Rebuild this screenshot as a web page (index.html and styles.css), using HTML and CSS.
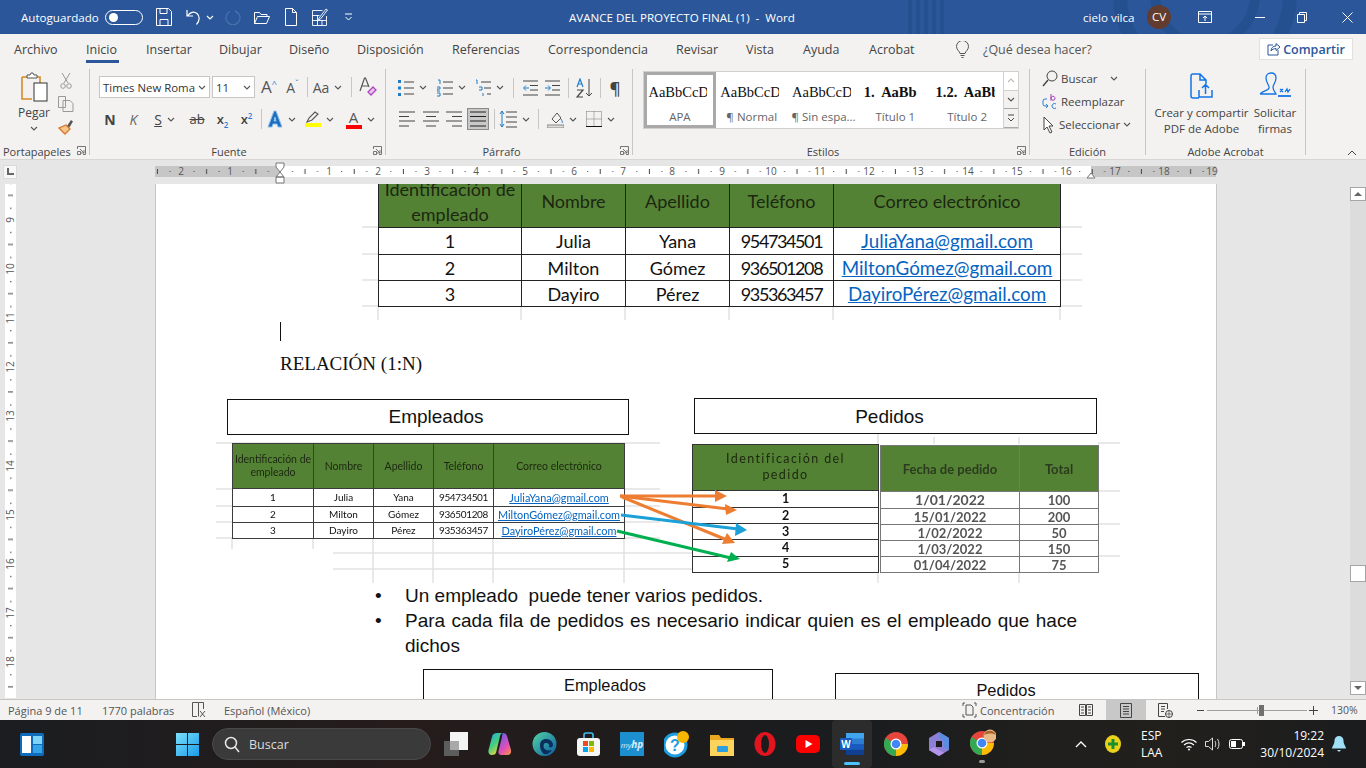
FILE: index.html
```html
<!DOCTYPE html>
<html lang="es">

<head>
    <meta charset="UTF-8">
    <meta name="viewport" content="width=device-width, initial-scale=1.0">
    <title>AVANCE DEL PROYECTO FINAL (1) - Word</title>
    <link rel="stylesheet" href="styles.css">
</head>

<body>
    <svg class="defs" width="0" height="0">
        <symbol id="chev" viewBox="0 0 8 5"><path d="M1 1l3 3 3-3" fill="none" stroke="currentColor" stroke-width="1.1"/></symbol>
        <symbol id="launch" viewBox="0 0 9 9"><path d="M.5 3V.5h8v8H6M3 3l4 4M7 4v3H4M.5 5.5h3v3h-3z" fill="none" stroke="#666" stroke-width=".9"/></symbol>
    </svg>

    <!-- barra de titulo -->
    <header class="titlebar">
        <svg class="title-deco" viewBox="905 0 461 34" width="461" height="34">
            <path d="M910 0v34M918 0v34M926 0v34M934 0v34M942 0v34" stroke="#25508f" stroke-width="4"/>
            <circle cx="1205" cy="-5" r="85" fill="none" stroke="#25508f" stroke-width="14"/>
            <circle cx="1205" cy="-5" r="50" fill="none" stroke="#25508f" stroke-width="10"/>
        </svg>
        <span class="qat-label">Autoguardado</span>
        <span class="toggle"><span class="toggle-dot"></span></span>
        <svg class="qat-save" width="16" height="18" viewBox="0 0 16 18"><path d="M.5.5h12l3 3v14H.5zM4 .5v5h7v-5M4 17.5v-6h8v6" fill="none" stroke="#fff"/></svg>
        <svg class="qat-undo" width="15" height="16" viewBox="0 0 15 16"><path d="M1 1v6h6M1.5 7C4 3 8 2 11 4.500s3 7-.5 11" fill="none" stroke="#fff" stroke-width="1.200"/></svg>
        <svg class="chev qat-chev" width="8" height="5"><use href="#chev"/></svg>
        <svg class="qat-redo" width="16" height="16" viewBox="0 0 16 16"><path d="M10 1.500l3 3M5 2.500a7 7 0 1 0 6 0" fill="none" stroke="#4d74ac" stroke-width="1.100"/></svg>
        <svg class="qat-open" width="16" height="13" viewBox="0 0 16 13"><path d="M.5 12.500V1.500h5l1.500 2h6v2M.5 12.500h12l3-7H3.500z" fill="none" stroke="#fff"/></svg>
        <svg class="qat-new" width="12" height="18" viewBox="0 0 12 18"><path d="M.5.5h7l4 4v13H.5zM7.500.5v4h4" fill="none" stroke="#fff"/></svg>
        <svg class="qat-edit" width="16" height="18" viewBox="0 0 16 18"><path d="M.5 2.500h10M.5 2.500v15h14V8M.5 7.500h7M.5 12.500h14M5.500 7v10.500M10 12.500v5M7 10l7-9 1.500 1-7 9-2 1z" fill="none" stroke="#fff" stroke-width=".9"/></svg>
        <svg class="qat-more" width="9" height="8" viewBox="0 0 9 8"><path d="M1 1h7M1.500 4l3 3 3-3" fill="none" stroke="#fff"/></svg>
        <span class="doc-title">AVANCE DEL PROYECTO FINAL (1)&nbsp; -&nbsp; Word</span>
        <span class="user-name">cielo vilca</span>
        <span class="avatar">CV</span>
        <svg class="win-ribbon" width="14" height="12" viewBox="0 0 14 12"><path d="M.5.5h13v11H.5zM.5 3h13M7 10V5M5 7l2-2 2 2" fill="none" stroke="#fff"/></svg>
        <svg class="win-min" width="10" height="1"><rect width="10" height="1" fill="#fff"/></svg>
        <svg class="win-max" width="10" height="11" viewBox="0 0 10 11"><path d="M.5 2.500h7v8h-7zM2.500 2.500v-2h7v8h-2" fill="none" stroke="#fff"/></svg>
        <svg class="win-close" width="11" height="11" viewBox="0 0 11 11"><path d="M.5.5l10 10M10.500.5l-10 10" stroke="#fff"/></svg>
    </header>

    <!-- pestañas -->
    <nav class="tabs">
        <span class="tab t-archivo">Archivo</span>
        <span class="tab t-inicio active">Inicio</span>
        <span class="tab t-insertar">Insertar</span>
        <span class="tab t-dibujar">Dibujar</span>
        <span class="tab t-diseno">Diseño</span>
        <span class="tab t-dispo">Disposición</span>
        <span class="tab t-ref">Referencias</span>
        <span class="tab t-corr">Correspondencia</span>
        <span class="tab t-rev">Revisar</span>
        <span class="tab t-vista">Vista</span>
        <span class="tab t-ayuda">Ayuda</span>
        <span class="tab t-acro">Acrobat</span>
        <svg class="bulb" width="13" height="17" viewBox="0 0 13 17"><path d="M4 12.500C3.500 10 .5 9 .5 5.500a6 6 0 0 1 12 0C12.500 9 9.500 10 9 12.500zM4.500 14.500h4M5.500 16.500h2" fill="none" stroke="#555"/></svg>
        <span class="tab tell">¿Qué desea hacer?</span>
        <span class="share">
            <svg width="14" height="14" viewBox="0 0 14 14"><path d="M6 3H1v10h10V8M4 9c0-3 2-5 5-5V1.500l4 3.500-4 3.500V6.500C7 6.500 5 7.500 4 9z" fill="none" stroke="#2b579a"/></svg>
            Compartir
        </span>
    </nav>

    <!-- cinta -->
    <section class="ribbon">
        <div class="group g-clip">
            <div class="clip-body">
                <div class="paste">
                    <svg width="27" height="30" viewBox="0 0 27 30"><path d="M1 5h7M15 5h4v6M1 5v22h10" fill="none" stroke="#d58a2a" stroke-width="1.600"/><path d="M6 6V3h3l1-2h2l1 2h3v3z" fill="#fff" stroke="#555"/><rect x="13" y="11" width="13" height="18" fill="#fff" stroke="#333"/></svg>
                    <span class="paste-label">Pegar</span>
                    <svg class="chev" width="8" height="5"><use href="#chev"/></svg>
                </div>
                <div class="clip-tools">
                    <svg width="12" height="17" viewBox="0 0 12 17"><path d="M2 1l6 10M10 1L4 11" stroke="#999" fill="none"/><circle cx="3" cy="14" r="2.300" fill="none" stroke="#999"/><circle cx="9" cy="14" r="2.300" fill="none" stroke="#999"/></svg>
                    <svg width="16" height="16" viewBox="0 0 16 16"><path d="M.5.5h7v11h-7zM5 4.500h7l3 3v8H5z" fill="#f3f2f1" stroke="#999"/></svg>
                    <svg width="16" height="16" viewBox="0 0 16 16"><path d="M9 7l4-6 2 1.500L11 9z" fill="#555"/><path d="M8 6l4 4-5 5-6-6z" fill="#f6c590" stroke="#d9782a" stroke-width="1.300"/></svg>
                </div>
            </div>
            <div class="group-label left">Portapapeles</div>
            <svg class="launcher" width="9" height="9"><use href="#launch"/></svg>
        </div>

        <div class="group g-font">
            <div class="row font-r1">
                <span class="combo"><span class="combo-text">Times New Roma</span><svg class="chev" width="8" height="5"><use href="#chev"/></svg></span>
                <span class="combo size"><span class="combo-text">11</span><svg class="chev" width="8" height="5"><use href="#chev"/></svg></span>
                <span class="big-a">A<sup>^</sup></span>
                <span class="small-a">A<sup>ˇ</sup></span>
                <i class="sep"></i>
                <span class="tool"><span class="aa">Aa</span><svg class="chev" width="8" height="5"><use href="#chev"/></svg></span>
                <i class="sep"></i>
                <svg width="18" height="20" viewBox="0 0 18 20"><path d="M1 14L5.500 1h1L10 10M3 9h6" fill="none" stroke="#555" stroke-width="1.200"/><path d="M9 15l5-5 3 3-5 5z" fill="#e8c6ef" stroke="#b146c2" stroke-width="1.300"/></svg>
            </div>
            <div class="row font-r2">
                <b class="fmt bold">N</b>
                <span class="fmt ital">K</span>
                <span class="tool"><span class="fmt under">S</span><svg class="chev" width="8" height="5"><use href="#chev"/></svg></span>
                <span class="fmt strike">ab</span>
                <span class="fmt script">x<sub>2</sub></span>
                <span class="fmt script">x<sup>2</sup></span>
                <i class="sep"></i>
                <span class="tool"><svg width="16" height="18" viewBox="0 0 16 18"><path d="M1 17L7 1h2l6 16h-4l-1-3H6l-1 3zM7 11h2L8 7z" fill="#1f6fc0" stroke="#8cc0ea"/></svg><svg class="chev" width="8" height="5"><use href="#chev"/></svg></span>
                <span class="tool"><span class="color-ic"><svg width="16" height="12" viewBox="0 0 16 12"><path d="M2 11l2-4 6-6 3 2-6 6z" fill="#f3f2f1" stroke="#555" stroke-width="1.100"/></svg><i class="bar yellow"></i></span><svg class="chev" width="8" height="5"><use href="#chev"/></svg></span>
                <span class="tool"><span class="color-ic"><span class="color-a">A</span><i class="bar red"></i></span><svg class="chev" width="8" height="5"><use href="#chev"/></svg></span>
            </div>
            <div class="group-label pad-font">Fuente</div>
            <svg class="launcher" width="9" height="9"><use href="#launch"/></svg>
        </div>

        <div class="group g-para">
            <div class="row para-r1">
                <span class="tool"><svg width="16" height="18" viewBox="0 0 16 18"><path d="M6 3h10M6 9h10M6 15h10" stroke="#444"/><path d="M0 1h3v3H0zM0 7.500h3v3H0zM0 14h3v3H0z" fill="#1f7cc8"/></svg><svg class="chev" width="8" height="5"><use href="#chev"/></svg></span>
                <span class="tool"><svg width="16" height="18" viewBox="0 0 16 18"><path d="M6 3h10M6 9h10M6 15h10" stroke="#444"/><path d="M1 1h2v4M0 8h3v2H0v2h3M0 14h3v3H0" fill="none" stroke="#1f7cc8"/></svg><svg class="chev" width="8" height="5"><use href="#chev"/></svg></span>
                <span class="tool"><svg width="16" height="18" viewBox="0 0 16 18"><path d="M6 3h10M9 9h7M12 15h4" stroke="#444"/><path d="M1 1h1v4M4 8h3v3H4M8 14v3" fill="none" stroke="#1f7cc8"/></svg><svg class="chev" width="8" height="5"><use href="#chev"/></svg></span>
                <i class="sep"></i>
                <svg width="15" height="16" viewBox="0 0 15 16"><path d="M0 1h15M7 5.500h8M7 10h8M0 15h15" stroke="#444"/><path d="M6 8H1M3 5.500L.5 8 3 10.500" stroke="#1f7cc8" fill="none"/></svg>
                <svg width="15" height="16" viewBox="0 0 15 16"><path d="M0 1h15M7 5.500h8M7 10h8M0 15h15" stroke="#444"/><path d="M0 8h5M3 5.500L5.500 8 3 10.500" stroke="#1f7cc8" fill="none"/></svg>
                <i class="sep"></i>
                <svg width="17" height="20" viewBox="0 0 17 20"><path d="M13 1v17M10 15l3 3 3-3" fill="none" stroke="#444"/><path d="M1 9l3-8 3 8M2 6h4" fill="none" stroke="#1f7cc8" stroke-width="1.200"/><path d="M1 12h6L1 19h6" fill="none" stroke="#444" stroke-width="1.200"/></svg>
                <i class="sep"></i>
                <span class="pilcrow">¶</span>
            </div>
            <div class="row para-r2">
                <svg width="16" height="16" viewBox="0 0 16 16"><path d="M0 1h16M0 5.500h10M0 10h16M0 15h10" stroke="#444"/></svg>
                <svg width="16" height="16" viewBox="0 0 16 16"><path d="M0 1h16M3 5.500h10M0 10h16M3 15h10" stroke="#444"/></svg>
                <svg width="16" height="16" viewBox="0 0 16 16"><path d="M0 1h16M6 5.500h10M0 10h16M6 15h10" stroke="#444"/></svg>
                <span class="justify"><svg width="16" height="16" viewBox="0 0 16 16"><path d="M0 1h16M0 5.500h16M0 10h16M0 15h16" stroke="#222"/></svg></span>
                <i class="sep"></i>
                <span class="tool"><svg width="18" height="18" viewBox="0 0 18 18"><path d="M7 2h11M7 7h11M7 12h11M7 17h11" stroke="#444"/><path d="M3 1v16M1 4l2-3 2 3M1 14l2 3 2-3" fill="none" stroke="#1f7cc8"/></svg><svg class="chev" width="8" height="5"><use href="#chev"/></svg></span>
                <i class="sep"></i>
                <span class="tool"><svg width="17" height="18" viewBox="0 0 17 18"><path d="M5 9l5-6 4 5-5 5z" fill="none" stroke="#555"/><path d="M14 9c1 2 2 3 1 4" stroke="#1f7cc8" fill="none"/><rect y="15" width="17" height="3" fill="#ddd" stroke="#888"/></svg><svg class="chev" width="8" height="5"><use href="#chev"/></svg></span>
                <span class="tool"><svg width="16" height="16" viewBox="0 0 16 16"><path d="M.5.5h15v15M.5 8h15M8 .5v15M.5.5v15" fill="none" stroke="#777" stroke-dasharray="1 1"/><path d="M0 15.500h16" stroke="#111"/></svg><svg class="chev" width="8" height="5"><use href="#chev"/></svg></span>
            </div>
            <div class="group-label pad-para">Párrafo</div>
            <svg class="launcher" width="9" height="9"><use href="#launch"/></svg>
        </div>

        <div class="group g-styles">
            <div class="gallery">
                <div class="style-item selected"><span class="sample">AaBbCcDd</span><span class="style-name">APA</span></div>
                <div class="style-item"><span class="sample">AaBbCcDd</span><span class="style-name">¶ Normal</span></div>
                <div class="style-item"><span class="sample">AaBbCcDd</span><span class="style-name">¶ Sin espa...</span></div>
                <div class="style-item"><span class="sample heading">1.&nbsp; AaBb</span><span class="style-name">Título 1</span></div>
                <div class="style-item"><span class="sample heading">1.2.&nbsp; AaBb</span><span class="style-name">Título 2</span></div>
                <div class="gallery-btns">
                    <span class="g-btn dim"><svg width="8" height="5" viewBox="0 0 8 5"><path d="M1 4l3-3 3 3" fill="none" stroke="#bbb" stroke-width="1.100"/></svg></span>
                    <span class="g-btn"><svg class="chev" width="8" height="5"><use href="#chev"/></svg></span>
                    <span class="g-btn"><svg width="8" height="9" viewBox="0 0 8 9"><path d="M1 1h6M1 4l3 3 3-3" fill="none" stroke="#444"/></svg></span>
                </div>
            </div>
            <div class="group-label pad-styles">Estilos</div>
            <svg class="launcher" width="9" height="9"><use href="#launch"/></svg>
        </div>

        <div class="group g-edit">
            <div class="edit-list">
                <div class="edit-row"><svg width="16" height="17" viewBox="0 0 16 17"><circle cx="10" cy="6" r="5" fill="none" stroke="#444"/><path d="M6 10l-5 6" stroke="#444" stroke-width="1.400"/></svg><span>Buscar</span><svg class="chev find-chev" width="8" height="5"><use href="#chev"/></svg></div>
                <div class="edit-row"><svg width="16" height="16" viewBox="0 0 16 16"><path d="M5 5H3a2 2 0 0 0-2 2v3a2 2 0 0 0 2 2h2M4 10l2 2-2 2" fill="none" stroke="#2b7cd3"/><path d="M9 0v6.500M9 4.500a2 2 0 1 1 3 1.500 2 2 0 0 1-3-1.500" fill="none" stroke="#a33bb5"/><path d="M14 10a2.500 2.500 0 1 0 0 4" fill="none" stroke="#2b7cd3"/></svg><span>Reemplazar</span></div>
                <div class="edit-row"><svg width="14" height="18" viewBox="0 0 14 18"><path d="M2 1v13l3-3 3 6 2-1-3-6h4z" fill="#fff" stroke="#444"/></svg><span>Seleccionar</span><svg class="chev" width="8" height="5"><use href="#chev"/></svg></div>
            </div>
            <div class="group-label nolaunch">Edición</div>
        </div>

        <div class="group g-adobe">
            <div class="adobe-list">
                <div class="adobe-item share-pdf">
                    <svg width="23" height="26" viewBox="0 0 23 26"><path d="M9 25H3a2 2 0 0 1-2-2V3a2 2 0 0 1 2-2h7l6 6v4M10 1v6h6M9 17v7h13v-7M15.500 21v-9M12 15l3.500-3.500L19 15" fill="none" stroke="#1473e6" stroke-width="1.500"/></svg>
                    <span>Crear y compartir<br>PDF de Adobe</span>
                </div>
                <div class="adobe-item sign">
                    <svg width="32" height="28" viewBox="0 0 32 28"><path d="M1 22c4-4 8-3 9-6 1-2-3-5-3-10 0-3 2-5 5-5s5 2 5 5c0 4-3 7-3 9 0 4 3 6 3 7H1M21 17l3 3M24 17l-3 3M26 20l2-3 1 3 2-3" fill="none" stroke="#1473e6" stroke-width="1.300"/><path d="M19 24h13" stroke="#1473e6" stroke-width="1.800"/></svg>
                    <span>Solicitar<br>firmas</span>
                </div>
            </div>
            <div class="group-label nolaunch">Adobe Acrobat</div>
        </div>
        <svg class="collapse" width="10" height="6" viewBox="0 0 10 6"><path d="M1 5l4-4 4 4" fill="none" stroke="#444"/></svg>
    </section>

    <!-- regla -->
    <div class="ruler-band">
        <span class="tab-stop"><svg width="8" height="8" viewBox="0 0 8 8"><path d="M1 0h2v5h5v2H1z" fill="#666"/></svg></span>
        <svg class="hruler" width="1065" height="24" viewBox="155 160 1065 24">
            <defs>
                <pattern id="hticks" x="280" y="166" width="49.2" height="11" patternUnits="userSpaceOnUse">
                    <rect x="12" y="5" width="1" height="1" fill="#444"/>
                    <rect x="24.500" y="3" width="1" height="5" fill="#444"/>
                    <rect x="37" y="5" width="1" height="1" fill="#444"/>
                </pattern>
            </defs>
            <rect x="155" y="166" width="125" height="11" fill="#c6c6c6"/>
            <rect x="280" y="166" width="811" height="11" fill="#fff"/>
            <rect x="1091" y="166" width="125" height="11" fill="#c6c6c6"/>
            <rect x="155" y="166" width="1061" height="11" fill="url(#hticks)"/>
            <g class="ruler-num">
                <text x="181" y="175">2</text><text x="230" y="175">1</text><text x="329" y="175">1</text><text x="378" y="175">2</text><text x="427" y="175">3</text><text x="476" y="175">4</text><text x="525" y="175">5</text><text x="574" y="175">6</text><text x="623" y="175">7</text><text x="672" y="175">8</text><text x="722" y="175">9</text><text x="771" y="175">10</text><text x="820" y="175">11</text><text x="869" y="175">12</text><text x="918" y="175">13</text><text x="968" y="175">14</text><text x="1017" y="175">15</text><text x="1066" y="175">16</text><text x="1115" y="175">17</text><text x="1164" y="175">18</text><text x="1212" y="175">19</text>
            </g>
            <path d="M276 163h8v4l-4 5-4-5zM276 177l4-5 4 5zM276 177h8v6h-8z" fill="#fff" stroke="#777"/>
            <path d="M1087 178l4-5 4 5z" fill="#fff" stroke="#777"/>
        </svg>
    </div>

    <!-- documento -->
    <main class="doc">
        <div class="vzone">
            <svg class="vruler" width="11" height="514" viewBox="5 184 11 514">
                <defs>
                    <pattern id="vticks" x="5" y="220" width="11" height="49.15" patternUnits="userSpaceOnUse">
                        <rect x="5" y="12" width="1.500" height="1" fill="#444"/>
                        <rect x="3" y="24" width="5" height="1" fill="#444"/>
                        <rect x="5" y="37" width="1.500" height="1" fill="#444"/>
                    </pattern>
                </defs>
                <rect x="5" y="184" width="11" height="514" fill="#fff"/>
                <rect x="5" y="184" width="11" height="514" fill="url(#vticks)"/>
                <g class="ruler-num">
                    <text transform="translate(14 220) rotate(-90)">9</text><text transform="translate(14 269) rotate(-90)">10</text><text transform="translate(14 318) rotate(-90)">11</text><text transform="translate(14 367) rotate(-90)">12</text><text transform="translate(14 416) rotate(-90)">13</text><text transform="translate(14 466) rotate(-90)">14</text><text transform="translate(14 515) rotate(-90)">15</text><text transform="translate(14 564) rotate(-90)">16</text><text transform="translate(14 613) rotate(-90)">17</text><text transform="translate(14 662) rotate(-90)">18</text>
                </g>
            </svg>
        </div>

        <article class="page">
            <svg class="grid-lines" width="1060" height="515" viewBox="156 184 1060 515">
                <g stroke="#e2e2e2" stroke-width="1.500">
                    <path d="M362 227h720M362 254h720M362 280h720M362 306h720M378 306v14M521 306v14M625 306v14M729 306v14M833 306v14M1060 306v14"/>
                    <path d="M216 443h444M216 489h444M216 506h444M216 522h444M216 538h444M333 553h360M333 569h360M232 538v11M313 538v11M373 538v45M433 538v45M493 538v45M624 538v45"/>
                    <path d="M1098 443h22M1098 491h22M1098 524h22M1098 556h22M878 434v10M878 570v13M1019 570v13M1019 437v7M934 437v7"/>
                </g>
            </svg>

            <table class="sheet sheet-top">
                <colgroup><col class="c143"><col class="c104"><col class="c104"><col class="c104"><col class="c227"></colgroup>
                <tr class="head"><th>Identificación de empleado</th><th>Nombre</th><th>Apellido</th><th>Teléfono</th><th>Correo electrónico</th></tr>
                <tr class="r27"><td>1</td><td>Julia</td><td>Yana</td><td class="tel">954734501</td><td><a>JuliaYana@gmail.com</a></td></tr>
                <tr class="r26"><td>2</td><td>Milton</td><td>Gómez</td><td class="tel">936501208</td><td><a>MiltonGómez@gmail.com</a></td></tr>
                <tr class="r26"><td>3</td><td>Dayiro</td><td>Pérez</td><td class="tel">935363457</td><td><a>DayiroPérez@gmail.com</a></td></tr>
            </table>

            <div class="caret"></div>
            <p class="rel-title">RELACIÓN (1:N)</p>

            <section class="diagram">
                <div class="diag-left">
                    <div class="entity ent-emp">Empleados</div>
                    <table class="sheet sheet-emp">
                        <colgroup><col class="c81"><col class="c60"><col class="c60"><col class="c60"><col class="c131"></colgroup>
                        <tr class="head"><th>Identificación de empleado</th><th>Nombre</th><th>Apellido</th><th>Teléfono</th><th>Correo electrónico</th></tr>
                        <tr class="r18"><td>1</td><td>Julia</td><td>Yana</td><td class="tel">954734501</td><td><a>JuliaYana@gmail.com</a></td></tr>
                        <tr class="r16"><td>2</td><td>Milton</td><td>Gómez</td><td class="tel">936501208</td><td><a>MiltonGómez@gmail.com</a></td></tr>
                        <tr class="r16"><td>3</td><td>Dayiro</td><td>Pérez</td><td class="tel">935363457</td><td><a>DayiroPérez@gmail.com</a></td></tr>
                    </table>
                </div>
                <div class="diag-right">
                    <div class="entity ent-ped">Pedidos</div>
                    <div class="order-tables">
                        <table class="sheet sheet-ord">
                            <colgroup><col class="c186"></colgroup>
                            <tr class="head"><th>Identificación del<br>pedido</th></tr>
                            <tr class="r17"><td>1</td></tr>
                            <tr class="r16"><td>2</td></tr>
                            <tr class="r16"><td>3</td></tr>
                            <tr class="r16"><td>4</td></tr>
                            <tr class="r16"><td>5</td></tr>
                        </table>
                        <table class="sheet sheet-date">
                            <colgroup><col class="c139"><col class="c79"></colgroup>
                            <tr class="head"><th>Fecha de pedido</th><th>Total</th></tr>
                            <tr class="r17"><td class="date-big">1/01/2022</td><td>100</td></tr>
                            <tr class="r16"><td>15/01/2022</td><td>200</td></tr>
                            <tr class="r16"><td>1/02/2022</td><td>50</td></tr>
                            <tr class="r16"><td>1/03/2022</td><td>150</td></tr>
                            <tr class="r16"><td>01/04/2022</td><td>75</td></tr>
                        </table>
                    </div>
                </div>
            </section>

            <ul class="notes">
                <li>Un empleado&nbsp; puede tener varios pedidos.</li>
                <li>Para cada fila de pedidos es necesario indicar quien es el empleado que hace dichos</li>
            </ul>

            <div class="lower-boxes">
                <div class="lower lower-emp">Empleados</div>
                <div class="lower lower-ped">Pedidos</div>
            </div>

            <svg class="arrows" width="1060" height="515" viewBox="156 184 1060 515">
                <g fill="none" stroke-width="3">
                    <path d="M620 496h98" stroke="#ed7d31"/>
                    <path d="M620 496l108 13" stroke="#ed7d31"/>
                    <path d="M622 497l105 43" stroke="#ed7d31"/>
                    <path d="M621 515l117 14" stroke="#1ba1d8"/>
                    <path d="M617 531l114 27" stroke="#00b050"/>
                </g>
                <path d="M715 490l12 6-12 6z" fill="#ed7d31"/>
                <path d="M725 504l12 6-11 5z" fill="#ed7d31"/>
                <path d="M727 533l8 10-13 1z" fill="#ed7d31"/>
                <path d="M736 523l11 7-12 6z" fill="#1ba1d8"/>
                <path d="M731 552l9 7-13 3z" fill="#00b050"/>
            </svg>
        </article>

        <div class="vscroll">
            <span class="sb-btn"><svg width="8" height="4" viewBox="0 0 8 4"><path d="M0 4l4-4 4 4z" fill="#666"/></svg></span>
            <span class="sb-thumb"></span>
            <span class="sb-btn"><svg width="8" height="4" viewBox="0 0 8 4"><path d="M0 0l4 4 4-4z" fill="#666"/></svg></span>
        </div>
    </main>

    <!-- barra de estado -->
    <footer class="status">
        <span class="st-page">Página 9 de 11</span>
        <span class="st-words">1770 palabras</span>
        <svg class="st-proof" width="14" height="16" viewBox="0 0 14 16"><path d="M5 14.500H.5V.5h6v14M6.500.5h5V7M8 9l5 6M13 9l-5 6" fill="none" stroke="#555"/></svg>
        <span class="st-lang">Español (México)</span>
        <svg class="st-focus" width="15" height="16" viewBox="0 0 15 16"><path d="M4 3h5l2 2v8H4zM1 4V1h2M12 1h2v3M14 12v3h-2M3 15H1v-3" fill="none" stroke="#555"/></svg>
        <span class="st-conc">Concentración</span>
        <svg class="st-read" width="14" height="14" viewBox="0 0 14 14"><path d="M.5 1.500h6v11h-6zM7.500 1.500h6v11h-6zM2 4h3M2 7h3M2 10h3M9 4h3M9 7h3M9 10h3" fill="none" stroke="#444"/></svg>
        <span class="st-print"><svg width="12" height="15" viewBox="0 0 12 15"><path d="M.5.500h11v14H.5zM3 3.500h6M3 6h6M3 8.500h6M3 11h6" fill="none" stroke="#444"/></svg></span>
        <svg class="st-web" width="15" height="15" viewBox="0 0 15 15"><path d="M7 13.500H.5V.5h9V6M3 3.500h4M3 6h4M3 8.500h3" fill="none" stroke="#444"/><circle cx="11" cy="11" r="3.500" fill="none" stroke="#444"/><path d="M7.500 11h7M11 7.500v7" stroke="#444" stroke-width=".7"/></svg>
        <svg class="st-minus" width="7" height="1"><rect width="7" height="1" fill="#444"/></svg>
        <span class="slider"><i class="slider-mark"></i><i class="slider-thumb"></i></span>
        <svg class="st-plus" width="9" height="9" viewBox="0 0 9 9"><path d="M0 4.500h9M4.500 0v9" stroke="#444"/></svg>
        <span class="st-zoom">130%</span>
    </footer>

    <!-- barra de tareas -->
    <footer class="taskbar">
        <svg class="tb-widgets" width="24" height="23" viewBox="0 0 24 23"><rect width="24" height="23" rx="2" fill="#0f6cbd"/><rect x="2" y="3" width="9" height="17" fill="#fff"/><rect x="13" y="3" width="9" height="8" fill="#7fd3f7"/><rect x="13" y="12" width="9" height="8" fill="#35a5e5"/></svg>
        <svg class="tb-start" width="23" height="23" viewBox="0 0 23 23"><defs><linearGradient id="win" x1="0" y1="0" x2="1" y2="1"><stop offset="0" stop-color="#7be0fb"/><stop offset="1" stop-color="#1a9be8"/></linearGradient></defs><path d="M0 0h11v11H0zM12 0h11v11H12zM0 12h11v11H0zM12 12h11v11H12z" fill="url(#win)"/></svg>
        <div class="tb-search">
            <svg width="16" height="17" viewBox="0 0 16 17"><circle cx="7" cy="7" r="5.500" fill="none" stroke="#e8e8e8" stroke-width="1.500"/><path d="M11 11l4 5" stroke="#e8e8e8" stroke-width="1.500"/></svg>
            <span>Buscar</span>
        </div>
        <div class="tb-apps">
            <svg width="24" height="24" viewBox="0 0 24 24"><rect x="0" y="9" width="15" height="15" fill="#5d5d5d"/><rect x="6" y="0" width="18" height="18" fill="#f4f4f4"/><rect x="6" y="9" width="9" height="9" fill="#a9a9a9"/></svg>
            <svg width="24" height="24" viewBox="0 0 24 24"><defs><linearGradient id="copa" x1="0" y1="0" x2=".6" y2="1"><stop offset="0" stop-color="#1fa6ee"/><stop offset=".55" stop-color="#45cf7c"/><stop offset="1" stop-color="#f2d33c"/></linearGradient><linearGradient id="copb" x1=".4" y1="0" x2="1" y2="1"><stop offset="0" stop-color="#7b5be8"/><stop offset=".55" stop-color="#e24fb4"/><stop offset="1" stop-color="#f59a3a"/></linearGradient></defs><path d="M15 1c2 0 3.500 1 4 3l4 14c.6 3-1 5-3.500 5H13c-2 0-3-2-2.500-4L14 5c.3-2 .5-4 1-4z" fill="url(#copb)"/><path d="M9 1h6c-1.500 0-2.500 1-3 3L8.500 19c-.5 3-2 4-4.500 4C1.500 23 0 21 .5 18L4 5c.5-3 2.500-4 5-4z" fill="url(#copa)"/></svg>
            <svg width="25" height="24" viewBox="0 0 25 24"><defs><linearGradient id="edge" x1="0" y1="0" x2="1" y2="1"><stop offset="0" stop-color="#52d6a3"/><stop offset="1" stop-color="#0c59a4"/></linearGradient></defs><circle cx="12.500" cy="12" r="12" fill="url(#edge)"/><path d="M8 13c0-4 3-6 6-6s7 2 7 6c0 2-2 3-4 2 1-3-1-4-3-4s-3 2-2 5c1 2 4 3 8 2-2 3-5 5-8 4-3-2-4-6-4-9z" fill="#0b2f5d"/></svg>
            <svg width="23" height="24" viewBox="0 0 23 24"><path d="M7 7V3q0-2 2-2h5q2 0 2 2v4" fill="none" stroke="#3fc0ef" stroke-width="1.600"/><rect y="6" width="23" height="18" rx="3" fill="#f6f6f6"/><rect x="6" y="9" width="5" height="5" fill="#e74c25"/><rect x="12" y="9" width="5" height="5" fill="#7fba00"/><rect x="6" y="15" width="5" height="5" fill="#00a4ef"/><rect x="12" y="15" width="5" height="5" fill="#ffb900"/></svg>
            <span class="myhp">my<b>hp</b></span>
            <svg width="26" height="28" viewBox="0 0 26 28"><circle cx="11" cy="15" r="11" fill="#fff" stroke="#1d9de0" stroke-width="3"/><text x="11" y="21" class="help-q">?</text><circle cx="19" cy="7" r="6" fill="#f7b500"/></svg>
            <svg width="24" height="24" viewBox="0 0 24 24"><path d="M0 3h9l2 3h13v17H0z" fill="#e9a820"/><rect y="8" width="24" height="16" fill="#fbd35d"/><rect x="7" y="14" width="11" height="6" rx="1" fill="#2b9fe0"/></svg>
            <svg width="22" height="24" viewBox="0 0 22 24"><ellipse cx="11" cy="12" rx="10.500" ry="12" fill="#e2141f"/><ellipse cx="11" cy="12" rx="4" ry="9" fill="#1c1c1c"/></svg>
            <svg width="24" height="24" viewBox="0 0 24 24"><rect y="3" width="24" height="18" rx="5" fill="#f00"/><path d="M9.500 8l7 4-7 4z" fill="#fff"/></svg>
            <span class="tb-word"><svg width="24" height="24" viewBox="0 0 24 24"><rect x="6" y="1" width="18" height="22" rx="1.500" fill="#2b7cd3"/><rect x="6" y="1" width="18" height="5.500" fill="#41a5ee"/><rect x="6" y="12" width="18" height="5.500" fill="#185abd"/><rect x="6" y="17.500" width="18" height="5.500" fill="#103f91"/><rect y="6" width="12" height="12" rx="1" fill="#185abd"/><text x="6" y="16" class="word-w">W</text></svg></span>
            <svg width="24" height="24" viewBox="0 0 24 24"><circle cx="12" cy="12" r="12" fill="#e5453a"/><path d="M12 12L1.600 6A12 12 0 0 0 12 24z" fill="#34a853"/><path d="M12 12h12A12 12 0 0 1 12 24z" fill="#fbbc05"/><circle cx="12" cy="12" r="5.500" fill="#fff"/><circle cx="12" cy="12" r="4.300" fill="#4285f4"/></svg>
            <svg width="22" height="24" viewBox="0 0 22 24"><path d="M11 0l10 6v12l-10 6-10-6V6z" fill="#8b7fd6"/><path d="M11 0l10 6v12l-5-3V9l-5-3z" fill="#5a8de0"/><path d="M1 18l10 6 5-3-10-6z" fill="#b494e8"/><path d="M8 9h6v6H8z" fill="#1c1c1c"/></svg>
            <span class="tb-chrome2">
                <svg width="26" height="26" viewBox="0 0 26 26"><g transform="translate(0 2)"><circle cx="12" cy="12" r="12" fill="#e5453a"/><path d="M12 12L1.600 6A12 12 0 0 0 12 24z" fill="#34a853"/><path d="M12 12h12A12 12 0 0 1 12 24z" fill="#fbbc05"/><circle cx="12" cy="12" r="5.500" fill="#fff"/><circle cx="12" cy="12" r="4.300" fill="#4285f4"/></g><circle cx="20" cy="7" r="6.500" fill="#eab985"/><path d="M14 6c1-5 10-6 12 0-3-2-8-2-12 0z" fill="#a8642a"/></svg>
                <i class="tb-dot"></i>
            </span>
        </div>
        <svg class="tb-up" width="12" height="7" viewBox="0 0 12 7"><path d="M1 6l5-5 5 5" fill="none" stroke="#fff" stroke-width="1.300"/></svg>
        <svg class="tb-green" width="16" height="18" viewBox="0 0 16 18"><ellipse cx="8" cy="9" rx="8" ry="9" fill="#e9d21c"/><path d="M8 4v10M3 9h10" stroke="#1e8d2e" stroke-width="3"/></svg>
        <span class="tb-lang">ESP<br>LAA</span>
        <svg class="tb-wifi" width="16" height="13" viewBox="0 0 16 13"><path d="M.5 4.500c4-4 11-4 15 0M3 7c3-2.500 7-2.500 10 0M5.500 9.500c1.500-1 3.500-1 5 0" fill="none" stroke="#fff" stroke-width="1.100"/><circle cx="8" cy="11.500" r="1" fill="#fff"/></svg>
        <svg class="tb-vol" width="16" height="14" viewBox="0 0 16 14"><path d="M.5 4.500h3l4-3.500v12l-4-3.500h-3zM10 4c1 2 1 4 0 6M12.500 2c2 3 2 7 0 10" fill="none" stroke="#ddd"/></svg>
        <svg class="tb-bat" width="16" height="10" viewBox="0 0 16 10"><rect x=".5" y=".5" width="13" height="9" rx="2" fill="none" stroke="#fff"/><rect x="2" y="2" width="5" height="6" fill="#fff"/><rect x="14" y="3" width="2" height="4" fill="#fff"/></svg>
        <span class="tb-clock">19:22<br>30/10/2024</span>
        <svg class="tb-bell" width="14" height="16" viewBox="0 0 14 16"><path d="M7 0a4.500 4.500 0 0 1 4.500 4.500c0 4 2.500 6 2.500 8H0c0-2 2.500-4 2.500-8A4.500 4.500 0 0 1 7 0zM5 14h4l-2 2z" fill="#9fe0f7"/></svg>
    </footer>
</body>

</html>
```

FILE: styles.css
```css
* {
    box-sizing: border-box;
}

html,
body {
    margin: 0;
    width: 1366px;
    height: 768px;
    overflow: hidden;
}

body {
    font-family: "Open Sans", sans-serif;
    font-size: 12px;
    color: #444;
    background: #e6e6e6;
}

.defs {
    display: block;
    height: 0;
}

.chev {
    color: #555;
    flex: none;
}

/* barra de titulo */
.titlebar {
    position: relative;
    height: 34px;
    display: flex;
    align-items: center;
    background: #2b579a;
    color: #fff;
    padding-left: 21px;
    font-size: 11.600px;
}

.title-deco {
    position: absolute;
    right: 0;
    top: 0;
}

.titlebar > svg:not(.title-deco),
.titlebar > span {
    position: relative;
    flex: none;
}

.qat-label {
    width: 84px;
}

.toggle {
    width: 38px;
    height: 15px;
    border: 1px solid #fff;
    border-radius: 8px;
    padding: 2px 3px;
}

.toggle-dot {
    display: block;
    width: 9px;
    height: 9px;
    border-radius: 50%;
    background: #fff;
}

.qat-save { margin-left: 13px; }
.qat-undo { margin-left: 14px; }
.qat-chev { margin-left: 5px; color: #fff; }
.qat-redo { margin-left: 11px; }
.qat-open { margin-left: 13px; }
.qat-new { margin-left: 15px; }
.qat-edit { margin-left: 15px; }
.qat-more { margin-left: 16px; }

.doc-title {
    margin-left: 216px;
    width: 514px;
}

.user-name {
    width: 64px;
}

.avatar {
    width: 24px;
    height: 24px;
    border-radius: 50%;
    background: #613c2f;
    text-align: center;
    line-height: 24px;
}

.win-ribbon { margin-left: 27px; }
.win-min { margin-left: 43px; }
.win-max { margin-left: 32px; }
.win-close { margin-left: 35px; }

/* pestañas */
.tabs {
    height: 32px;
    display: flex;
    align-items: center;
    background: #f3f2f1;
    position: relative;
    padding-bottom: 2px;
}

.tab {
    font-size: 12.500px;
    color: #444;
    flex: none;
}

.t-archivo { margin-left: 14px; width: 72px; }
.t-inicio { width: 60px; position: relative; }
.t-insertar { width: 73px; }
.t-dibujar { width: 70px; }
.t-diseno { width: 68px; }
.t-dispo { width: 95px; }
.t-ref { width: 96px; }
.t-corr { width: 128px; }
.t-rev { width: 70px; }
.t-vista { width: 57px; }
.t-ayuda { width: 66px; }
.t-acro { width: 87px; }

.t-inicio::after {
    content: "";
    position: absolute;
    left: 0;
    bottom: -5px;
    width: 33px;
    height: 3px;
    background: #2b579a;
}

.tell {
    margin-left: 14px;
    width: 276px;
    color: #555;
}

.share {
    width: 94px;
    height: 22px;
    display: flex;
    align-items: center;
    gap: 2px;
    justify-content: center;
    background: #fff;
    border: 1px solid #e3e1df;
    color: #2b579a;
    font-weight: 600;
    font-size: 12.500px;
}

/* cinta */
.ribbon {
    height: 94px;
    display: flex;
    padding: 3px 0 4px;
    background: #f3f2f1;
    position: relative;
    border-bottom: 1px solid #d8d6d4;
    box-shadow: 0 2px 2px rgba(0, 0, 0, .08);
}

.group {
    position: relative;
    display: flex;
    flex-direction: column;
    border-right: 1px solid #c8c6c4;
    flex: none;
}

.g-clip { width: 90px; }
.g-font { width: 296px; padding: 7px 0 0 9px; }
.g-para { width: 247px; padding: 7px 0 0 7px; }
.g-styles { width: 397px; padding: 2px 0 0 10px; }
.g-edit { width: 116px; }
.g-adobe { width: 160px; }

.group-label {
    margin-top: auto;
    margin-bottom: -4px;
    height: 14px;
    line-height: 14px;
    font-size: 11px;
    text-align: center;
    padding-right: 14px;
    color: #444;
}

.group-label.left {
    text-align: left;
    padding-left: 3px;
}

.group-label.nolaunch {
    padding-right: 0;
}

.group-label.pad-font { padding-right: 26px; }
.group-label.pad-para { padding-right: 22px; }
.group-label.pad-styles { padding-right: 26px; }

.launcher {
    position: absolute;
    right: 3px;
    bottom: 0;
}

.clip-body {
    display: flex;
    padding-top: 3px;
}

.paste {
    width: 58px;
    padding-left: 10px;
    display: flex;
    flex-direction: column;
    align-items: center;
}

.paste-label {
    margin-top: 3px;
    line-height: 16px;
}

.paste .chev {
    margin-top: 5px;
}

.clip-tools {
    display: flex;
    flex-direction: column;
    align-items: center;
    width: 16px;
    gap: 7px;
}

.row {
    display: grid;
    height: 22px;
    align-items: center;
    justify-items: center;
}

.row + .row {
    margin-top: 10px;
}

.font-r1 { grid-template-columns: 113px 45px 24px 23px 7px 33px 15px 18px; }
.font-r2 { grid-template-columns: 22px 25px 37px 28px 23px 25px 4px 36px 40px 42px; }
.para-r1 { grid-template-columns: 38px 40px 36px 12px 22px 23px 9px 23px 8px 22px; }
.para-r2 { grid-template-columns: 27px 22px 23px 26px 6px 35px 12px 35px 42px; }

.sep {
    width: 1px;
    height: 20px;
    background: #c8c6c4;
}

.tool {
    display: flex;
    align-items: center;
    gap: 5px;
}

.combo {
    justify-self: start;
    width: 111px;
    height: 22px;
    display: flex;
    align-items: center;
    justify-content: space-between;
    padding: 0 3px;
    background: #fff;
    border: 1px solid #c8c6c4;
    overflow: hidden;
}

.combo-text {
    white-space: nowrap;
    color: #333;
    font-size: 11.400px;
}

.combo.size {
    width: 43px;
}

.big-a {
    font-size: 17px;
    line-height: 20px;
    color: #555;
}

.small-a {
    font-size: 14px;
    color: #555;
}

.big-a sup,
.small-a sup {
    font-size: 9px;
    color: #2b7cd3;
    vertical-align: 6px;
    line-height: 0;
}

.aa {
    font-size: 14px;
    color: #555;
}

.fmt {
    color: #444;
    font-size: 14px;
}

.bold { font-size: 14px; font-weight: 700; }
.ital { font-style: italic; color: #666; }
.under { text-decoration: underline; }
.strike { text-decoration: line-through; font-size: 13px; }

.script {
    font-weight: 600;
    font-size: 13px;
}

.script sub,
.script sup {
    font-size: 8px;
    color: #2b7cd3;
    line-height: 0;
}

.color-ic {
    display: flex;
    flex-direction: column;
    align-items: center;
    width: 16px;
}

.color-a {
    font-size: 15px;
    line-height: 15px;
    color: #555;
}

.bar {
    display: block;
    width: 16px;
    height: 4px;
}

.yellow { background: #ff0; }
.red { background: #f00; }

.pilcrow {
    font-size: 17px;
    font-weight: 600;
    color: #444;
}

.justify {
    display: flex;
    width: 22px;
    height: 22px;
    align-items: center;
    justify-content: center;
    background: #c8c8c8;
    border: 1px solid #8a8a8a;
}

/* galeria de estilos */
.gallery {
    width: 376px;
    height: 58px;
    display: flex;
    background: #fff;
    border: 1px solid #d2d0ce;
    position: relative;
}

.style-item {
    width: 72px;
    height: 100%;
    overflow: hidden;
    display: flex;
    flex-direction: column;
    align-items: center;
    padding-top: 11px;
}

.style-item.selected {
    border: 3px solid #a9a9a9;
    padding-top: 8px;
    outline: 1px solid #fff;
    outline-offset: -4px;
}

.sample {
    width: 59px;
    height: 18px;
    margin-left: -4px;
    line-height: 18px;
    overflow: hidden;
    white-space: nowrap;
    font-family: "Liberation Serif", serif;
    font-size: 14.500px;
    color: #111;
    text-align: left;
}

.sample.heading {
    font-weight: 700;
}

.style-name {
    margin-top: 8px;
    font-size: 11.500px;
    color: #666;
    white-space: nowrap;
}

.gallery-btns {
    margin-left: auto;
    width: 15px;
    display: flex;
    flex-direction: column;
    border-left: 1px solid #d2d0ce;
}

.g-btn {
    flex: 1;
    display: flex;
    align-items: center;
    justify-content: center;
    border-bottom: 1px solid #a9a9a9;
    background: #f3f2f1;
}

.g-btn.dim {
    background: #fff;
    border-bottom: 1px solid #d2d0ce;
}

/* edicion */
.edit-list {
    display: flex;
    flex-direction: column;
    margin-top: -2px;
    padding: 0 0 0 12px;
}

.edit-row {
    height: 23px;
    display: flex;
    align-items: center;
    gap: 3px;
    white-space: nowrap;
    font-size: 11.500px;
}

.find-chev {
    margin-left: 9px;
}

/* acrobat */
.adobe-list {
    display: flex;
    padding-top: 3px;
}

.adobe-item {
    display: flex;
    flex-direction: column;
    align-items: center;
    text-align: center;
    font-size: 11.500px;
    line-height: 16px;
    white-space: nowrap;
}

.adobe-item svg {
    height: 28px;
    margin-bottom: 5px;
}

.share-pdf { width: 101px; padding-left: 10px; }
.sign { width: 56px; }

.collapse {
    position: absolute;
    right: 9px;
    bottom: 3px;
}

/* regla */
.ruler-band {
    height: 24px;
    display: flex;
    background: #e6e6e6;
    position: relative;
    z-index: 0;
}

.tab-stop {
    width: 14px;
    height: 14px;
    margin: 5px 0 0 3px;
    display: flex;
    align-items: center;
    justify-content: center;
    background: #f7f7f7;
    border: 1px solid #dadada;
}

.hruler {
    margin-left: 138px;
}

.ruler-num text {
    font-family: "Open Sans", sans-serif;
    font-size: 10px;
    fill: #555;
    text-anchor: middle;
}

/* documento */
.doc {
    height: 515px;
    display: flex;
    overflow: hidden;
    background: #e6e6e6;
}

.vzone {
    width: 155px;
    flex: none;
}

.vruler {
    display: block;
    margin-left: 5px;
}

.page {
    width: 1062px;
    flex: none;
    position: relative;
    background: #fff;
    border-left: 1px solid #c6c6c6;
    border-right: 1px solid #c6c6c6;
    overflow: hidden;
}

.grid-lines,
.arrows {
    position: absolute;
    left: 0;
    top: 0;
}

.page > :not(svg) {
    position: relative;
}

.sheet {
    border-collapse: collapse;
    table-layout: fixed;
    font-family: Lato, sans-serif;
    color: #111;
    text-align: center;
    background: #fff;
}

.sheet th {
    background: #548235;
    font-weight: 400;
    color: #1c2710;
    padding: 0;
}

.sheet td {
    padding: 0;
    overflow: hidden;
    white-space: nowrap;
}

.sheet a {
    color: #0563c1;
    text-decoration: underline;
}

.c143 { width: 143px; }
.c104 { width: 104px; }
.c227 { width: 227px; }
.c81 { width: 81px; }
.c60 { width: 60px; }
.c131 { width: 131px; }
.c186 { width: 186px; }
.c139 { width: 139px; }
.c79 { width: 79px; }

.sheet-top {
    width: 682px;
    margin: -21px 0 0 222px;
    font-size: 18px;
}

.sheet-top th,
.sheet-top td {
    border: 1.500px solid #222;
    line-height: 24px;
}

.sheet-top .head th {
    height: 64px;
    padding-top: 12px;
    line-height: 25px;
}

.sheet-top .tel {
    letter-spacing: -1.400px;
}

.sheet-top a {
    font-size: 18.800px;
}

.r27 td { height: 27px; }
.r26 td { height: 26px; }

.caret {
    width: 1px;
    height: 19px;
    margin: 15px 0 0 124px;
    background: #111;
}

.rel-title {
    margin: 12px 0 0 124px;
    font-family: "Liberation Serif", serif;
    font-size: 19px;
    line-height: 22px;
    color: #111;
}

.diagram {
    margin: 24px 0 0 71px;
    height: 184px;
    display: flex;
}

.diag-left {
    width: 402px;
}

.diag-right {
    width: 403px;
    margin: -1px 0 0 65px;
}

.entity {
    height: 36px;
    border: 1.500px solid #111;
    background: #fff;
    text-align: center;
    font-family: "Liberation Sans", sans-serif;
    font-size: 19px;
    line-height: 33px;
    color: #111;
}

.ent-emp { padding-left: 16px; }
.ent-ped { padding-right: 12px; line-height: 35px; }

.sheet-emp {
    width: 392px;
    margin: 8px 0 0 5px;
    font-size: 10px;
    filter: blur(.25px);
}

.sheet-emp th,
.sheet-emp td {
    border: 1px solid #3c3c3c;
    line-height: 13px;
}

.sheet-emp th {
    font-size: 10.500px;
}

.sheet-emp .tel {
    letter-spacing: -.35px;
}

.sheet-emp a {
    font-size: 10.900px;
}

.sheet-emp .head th { height: 45px; }
.r18 td { height: 18px; }
.r17 td { height: 17px; }
.r16 td { height: 16px; }

.order-tables {
    display: flex;
    margin: 10px 0 0 -2px;
}

.sheet-ord {
    width: 186px;
    font-size: 12.500px;
    font-weight: 700;
    filter: blur(.25px);
}

.sheet-ord th {
    letter-spacing: 1.400px;
}

.sheet-ord th,
.sheet-ord td {
    border: 1px solid #333;
    line-height: 14px;
}

.sheet-ord .head th {
    height: 45px;
    line-height: 16px;
}

.sheet-date {
    width: 218px;
    margin: 1px 0 0 1px;
    font-size: 13px;
    font-weight: 700;
    color: #555;
    filter: blur(.35px);
}

.sheet-date th,
.sheet-date td {
    border: 1px solid #777;
    line-height: 14px;
}

.sheet-date th {
    font-weight: 700;
    font-size: 13px;
    color: #2c3a1e;
}

.sheet-date .head th { height: 46px; }

.date-big {
    font-size: 14px;
}

.notes {
    list-style: none;
    margin: 0 0 0 219px;
    padding: 0;
    width: 702px;
    font-family: "Liberation Sans", sans-serif;
    font-size: 19px;
    line-height: 25px;
    color: #111;
    text-align: justify;
}

.notes li {
    display: flex;
}

.notes li::before {
    content: "•";
    width: 30px;
    flex: none;
}

.lower-boxes {
    display: flex;
    margin: 11px 0 0 267px;
    font-family: "Liberation Sans", sans-serif;
    font-size: 16.400px;
    color: #111;
    text-align: center;
}

.lower {
    height: 60px;
    border: 1px solid #111;
    line-height: 31px;
    background: #fff;
}

.lower-emp { width: 350px; padding-left: 14px; }
.lower-ped { width: 364px; margin: 4px 0 0 62px; padding-right: 22px; line-height: 33px; }

/* barra de desplazamiento */
.vscroll {
    margin-left: 133px;
    margin-top: 3px;
    width: 16px;
    height: 508px;
    background: #dcdcdc;
    display: flex;
    flex-direction: column;
}

.sb-btn {
    height: 15px;
    display: flex;
    align-items: center;
    justify-content: center;
    background: #fff;
    border: 1px solid #a6a6a6;
}

.sb-thumb {
    height: 17px;
    margin: 364px 0 99px;
    background: #fff;
    border: 1px solid #a6a6a6;
}

/* barra de estado */
.status {
    height: 21px;
    display: flex;
    align-items: center;
    background: #f3f2f1;
    border-top: 1px solid #c8c6c4;
    font-size: 11px;
    color: #555;
    white-space: nowrap;
}

.status > * {
    flex: none;
}

.st-page { margin-left: 8px; width: 94px; }
.st-words { width: 90px; }
.st-proof { width: 14px; }
.st-lang { margin-left: 18px; width: 738px; }
.st-conc { margin-left: 3px; width: 99px; }
.st-print {
    margin-left: 13px;
    width: 40px;
    height: 20px;
    display: flex;
    align-items: center;
    justify-content: center;
    background: #c8c8c8;
}
.st-web { margin-left: 12px; }
.st-minus { margin-left: 24px; }
.slider {
    position: relative;
    margin-left: 3px;
    width: 100px;
    height: 1px;
    background: #a0a0a0;
}
.slider-mark {
    position: absolute;
    left: 50px;
    top: -3px;
    width: 1px;
    height: 7px;
    background: #a0a0a0;
}
.slider-thumb {
    position: absolute;
    left: 52px;
    top: -5px;
    width: 5px;
    height: 11px;
    background: #707070;
}
.st-plus { margin-left: 2px; }
.st-zoom { margin-left: 13px; font-size: 10.500px; }

/* barra de tareas */
.taskbar {
    height: 48px;
    display: flex;
    align-items: center;
    background: linear-gradient(to right, #1b1d20, #251c1b 30%, #1a1c1e 60%, #22201c 85%, #1b1c1e);
    color: #fff;
    font-size: 12px;
    white-space: nowrap;
}

.taskbar > * {
    flex: none;
}

.tb-widgets { margin-left: 20px; }
.tb-start { margin-left: 132px; }

.tb-search {
    margin-left: 13px;
    width: 219px;
    height: 32px;
    display: flex;
    align-items: center;
    gap: 9px;
    padding-left: 11px;
    background: #3a3a3a;
    border: 1px solid #4a4a4a;
    border-radius: 16px;
    color: #ddd;
    font-size: 12.500px;
}

.tb-apps {
    margin-left: 13px;
    display: flex;
    align-items: center;
    gap: 20px;
}

.myhp {
    width: 24px;
    height: 24px;
    background: #1c8fd1;
    color: #d8f0fb;
    font-size: 8px;
    font-style: italic;
    text-align: center;
    line-height: 24px;
}

.myhp b {
    font-size: 10px;
}

.help-q {
    font-family: "Liberation Sans", sans-serif;
    font-size: 16px;
    font-weight: 700;
    fill: #1d9de0;
    text-anchor: middle;
}

.tb-word {
    position: relative;
    display: block;
    height: 24px;
}

.tb-word::before {
    content: "";
    position: absolute;
    left: -8px;
    top: -12px;
    width: 40px;
    height: 48px;
    border-radius: 4px;
    background: #2c2c2c;
}

.tb-word::after {
    content: "";
    position: absolute;
    left: 4px;
    top: 30px;
    width: 16px;
    height: 3px;
    border-radius: 2px;
    background: #4cc2ff;
}

.tb-word svg {
    position: relative;
}

.word-w {
    font-family: "Liberation Sans", sans-serif;
    font-size: 10px;
    font-weight: 700;
    fill: #fff;
    text-anchor: middle;
}

.tb-chrome2 {
    position: relative;
    display: block;
    height: 26px;
    margin-top: -4px;
}

.tb-dot {
    position: absolute;
    left: 9px;
    top: 31px;
    width: 6px;
    height: 3px;
    border-radius: 2px;
    background: #9a9a9a;
}

.tb-up { margin-left: 79px; }
.tb-green { margin-left: 18px; }

.tb-lang {
    margin-left: 20px;
    width: 40px;
    font-size: 12px;
    line-height: 17px;
    text-align: left;
}

.tb-vol { margin-left: 8px; }
.tb-bat { margin-left: 8px; }

.tb-clock {
    width: 79px;
    text-align: right;
    font-size: 12px;
    line-height: 17px;
}

.tb-bell { margin-left: 8px; }
```
